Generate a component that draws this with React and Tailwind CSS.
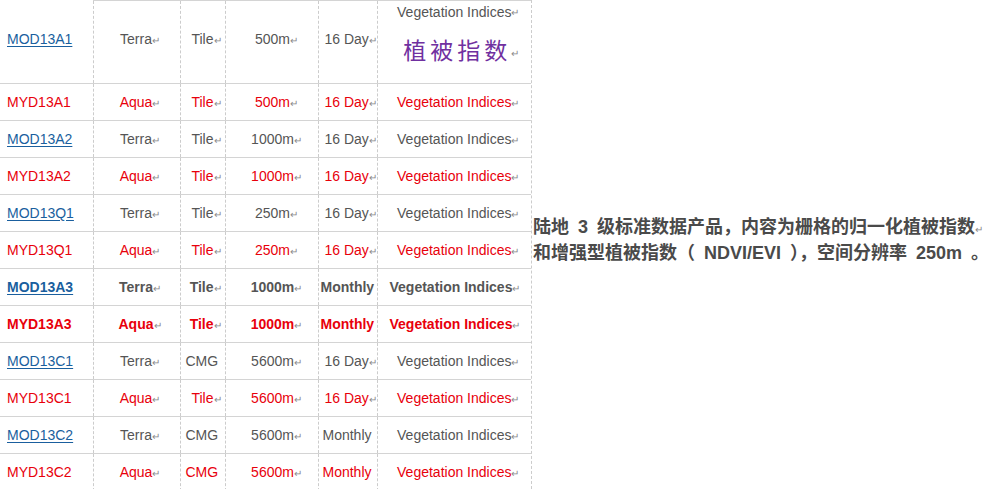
import React from 'react';

const GRAY = 'text-[#555555]';
const RED = 'text-[#e8000b]';

const rows = [
  { id: 'MYD13A1', sat: 'Aqua', grid: 'Tile', res: '500m', period: '16 Day', red: true },
  { id: 'MOD13A2', sat: 'Terra', grid: 'Tile', res: '1000m', period: '16 Day' },
  { id: 'MYD13A2', sat: 'Aqua', grid: 'Tile', res: '1000m', period: '16 Day', red: true },
  { id: 'MOD13Q1', sat: 'Terra', grid: 'Tile', res: '250m', period: '16 Day' },
  { id: 'MYD13Q1', sat: 'Aqua', grid: 'Tile', res: '250m', period: '16 Day', red: true },
  { id: 'MOD13A3', sat: 'Terra', grid: 'Tile', res: '1000m', period: 'Monthly', bold: true },
  { id: 'MYD13A3', sat: 'Aqua', grid: 'Tile', res: '1000m', period: 'Monthly', red: true, bold: true },
  { id: 'MOD13C1', sat: 'Terra', grid: 'CMG', res: '5600m', period: '16 Day' },
  { id: 'MYD13C1', sat: 'Aqua', grid: 'Tile', res: '5600m', period: '16 Day', red: true },
  { id: 'MOD13C2', sat: 'Terra', grid: 'CMG', res: '5600m', period: 'Monthly' },
  { id: 'MYD13C2', sat: 'Aqua', grid: 'CMG', res: '5600m', period: 'Monthly', red: true },
];

const Mark = () => (
  <span className="text-[10px] font-normal text-[#8a8a8a] align-middle">↵</span>
);

// a space as wide as the half-width space of the original CJK font
const Gap = () => <span className="inline-block w-[9px]" />;

const Td = ({ className = '', children }) => (
  <td className={`border-t border-t-[#d4d4d4] [border-top-style:solid] border-l border-l-[#cccccc] [border-left-style:dashed] p-0 overflow-hidden whitespace-nowrap ${className}`}>
    {children}
  </td>
);

const App = () =>
{
  return (
    <div className="w-[992px] h-[489px] overflow-hidden bg-white font-['Liberation_Sans','Noto_Sans_CJK_SC',sans-serif] text-[14px] flex">
      <table className="table-fixed border-collapse w-[531px] shrink-0">
        <colgroup>
          <col className="w-[93px]" />
          <col className="w-[87px]" />
          <col className="w-[45px]" />
          <col className="w-[93px]" />
          <col className="w-[59px]" />
          <col className="w-[154px]" />
        </colgroup>
        <tbody>
          <tr className={`h-[83px] ${GRAY}`}>
            <td className="p-0 pl-[7px] pb-[5px] text-left">
              <span className="text-[#1a5f9e] underline underline-offset-2">MOD13A1</span>
            </td>
            <Td className="text-center pl-[7px] pb-[5px]">Terra<Mark /></Td>
            <Td className="text-right pr-[3px] pb-[5px]">Tile<Mark /></Td>
            <Td className="text-center pl-[10px] pb-[5px]">500m<Mark /></Td>
            <Td className="text-left pl-[6px] pb-[5px]">16 Day<Mark /></Td>
            <Td className="text-center pl-[8px] align-top">
              <div className="mt-[2px] leading-[18px]">Vegetation Indices<Mark /></div>
              <div className="mt-[13px] pl-[10px] text-[23px] leading-[28px] tracking-[4px] text-[#7030a0] font-['Noto_Sans_CJK_SC',sans-serif]">
                植被指数<Mark />
              </div>
            </Td>
          </tr>
          {rows.map((r) =>
          {
            const color = r.red ? RED : GRAY;
            const periodPad = r.period === '16 Day' ? 'pl-[6px]' : r.bold ? 'pl-[2px]' : 'pl-[4px]';
            return (
              <tr key={r.id} className={`h-[37px] ${color} ${r.bold ? 'font-bold' : ''}`}>
                <td className="border-t border-[#d4d4d4] p-0 pl-[7px] text-left whitespace-nowrap">
                  {r.red
                    ? <span>{r.id}</span>
                    : <span className="text-[#1a5f9e] underline underline-offset-2">{r.id}</span>}
                </td>
                <Td className="text-center pl-[7px]">{r.sat}<Mark /></Td>
                {r.grid === 'CMG'
                  ? <Td className="text-left pl-[5px]">CMG</Td>
                  : <Td className="text-right pr-[3px]">{r.grid}<Mark /></Td>}
                <Td className="text-center pl-[10px]">{r.res}<Mark /></Td>
                <Td className={`text-left ${periodPad}`}>{r.period}{r.period === '16 Day' && <Mark />}</Td>
                {r.bold
                  ? <Td className="text-left pl-[12px]">Vegetation Indices<Mark /></Td>
                  : <Td className="text-center pl-[8px]">Vegetation Indices<Mark /></Td>}
              </tr>
            );
          })}
        </tbody>
      </table>
      <div className="flex-1 border-l border-dashed border-[#cccccc] flex items-center">
        <p className="pl-[1px] pb-[10px] font-bold text-[18px] leading-[23px] text-[#4a4a4a] whitespace-nowrap font-['Noto_Sans_CJK_SC',sans-serif]">
          陆地<Gap /><span className="font-['Liberation_Sans',sans-serif]">3</span><Gap />级标准数据产品，内容为栅格的归一化植被指数<Mark />
          <br />
          和增强型植被指数（<Gap /><span className="font-['Liberation_Sans',sans-serif]">NDVI/EVI</span><Gap />），空间分辨率<Gap /><span className="font-['Liberation_Sans',sans-serif]">250m</span><Gap />。
        </p>
      </div>
    </div>
  );
};

export default App;
